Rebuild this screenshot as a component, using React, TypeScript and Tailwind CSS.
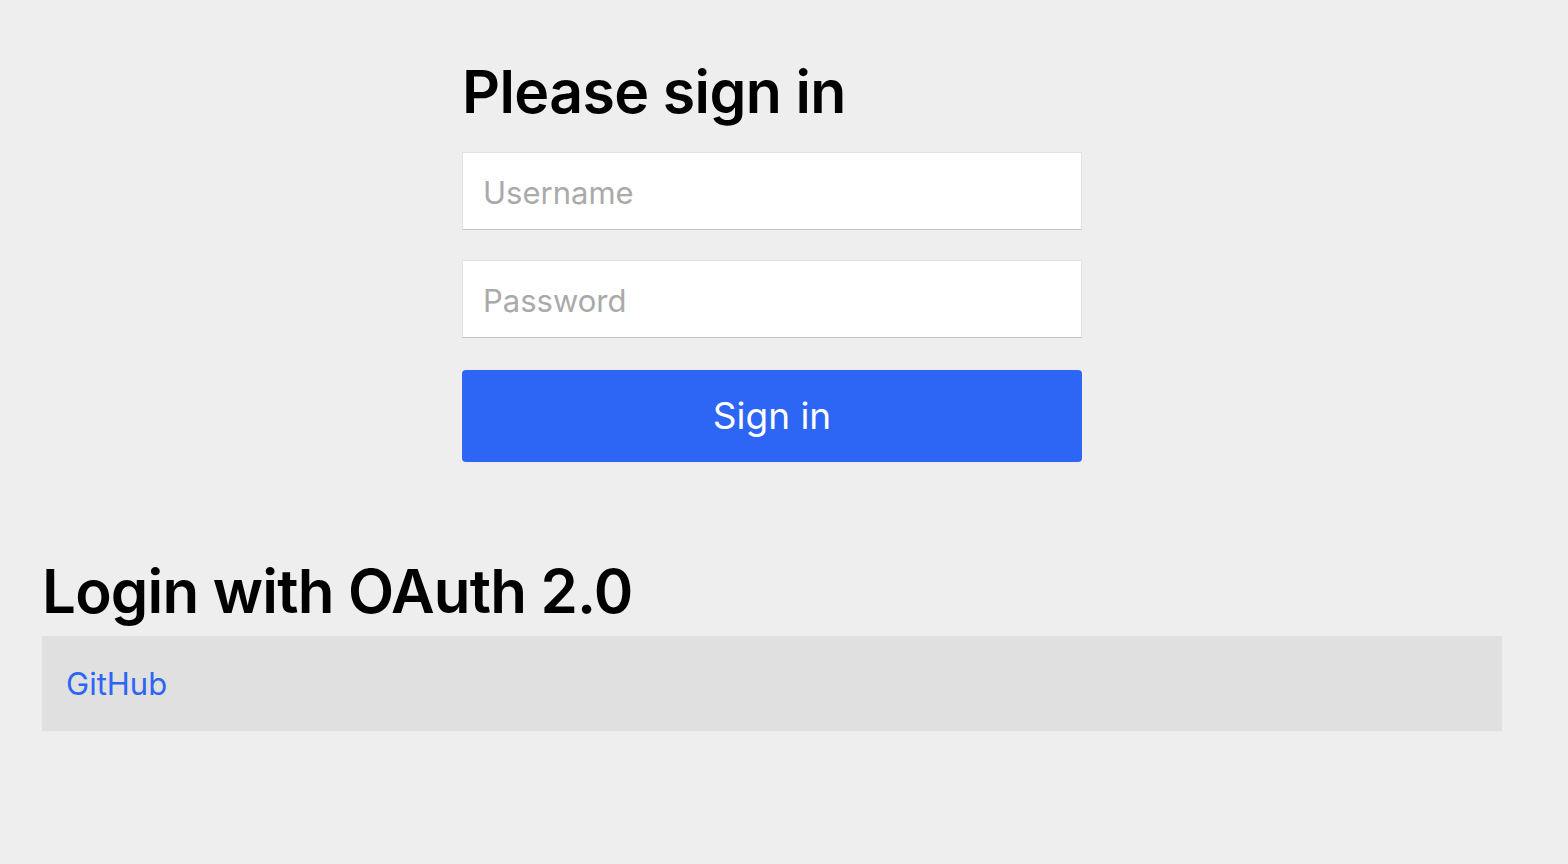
export default function App() {
  return (
    <div className="min-h-[864px] bg-[#eeeeee] pl-[42px] pr-[66px] pt-[56px] text-black" style={{ fontFamily: "Inter, 'Liberation Sans', sans-serif" }}>
      <div className="mx-auto w-[620px]">
        <h2 className="text-[59px] font-semibold leading-[72px] tracking-[-0.6px]">Please sign in</h2>
        <div className="mt-[24px] flex flex-col">
          <input
            placeholder="Username"
            className="h-[78px] w-full border border-[#e2e2e2] border-b-[#c4c4c4] bg-white px-[20px] pt-[2px] text-[31px] outline-none placeholder:text-[#aaaaaa]"
          />
          <input
            placeholder="Password"
            type="password"
            className="mt-[30px] h-[78px] w-full border border-[#e2e2e2] border-b-[#c4c4c4] bg-white px-[20px] pt-[2px] text-[31px] outline-none placeholder:text-[#aaaaaa]"
          />
          <button className="mt-[32px] h-[92px] w-full rounded-[4px] bg-[#2d65f5] text-[37px] text-white">Sign in</button>
        </div>
      </div>
      <h2 className="mt-[93px] text-[60px] font-semibold leading-[72px] tracking-[-0.8px]">Login with OAuth 2.0</h2>
      <div className="mt-[9px] flex h-[95px] items-center bg-[#e0e0e0] px-[24px] pt-[2px]">
        <a className="text-[31px] text-[#2d65f5]" href="#">GitHub</a>
      </div>
    </div>
  );
}
